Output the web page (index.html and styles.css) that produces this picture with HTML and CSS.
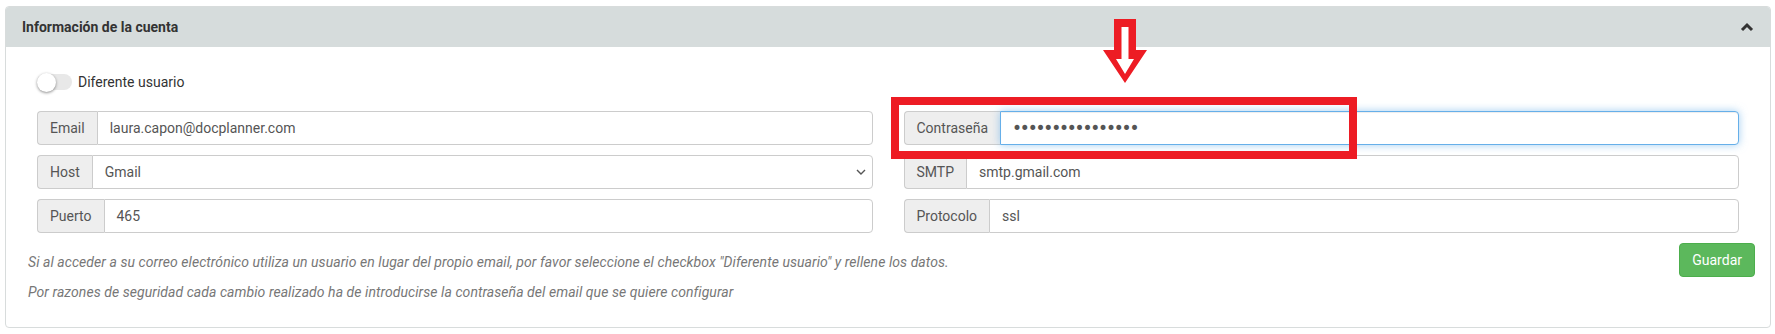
FILE: index.html
```html
<!DOCTYPE html>
<html lang="es">
<head>
<meta charset="utf-8">
<link rel="stylesheet" href="styles.css">
</head>
<body>
<div class="panel">
  <div class="panel-heading">
    <span class="panel-title">Información de la cuenta</span>
    <svg class="chev-up" width="14" height="10" viewBox="0 0 14 10"><polyline points="2,8 7,3 12,8" fill="none" stroke="#333" stroke-width="3"/></svg>
  </div>
  <div class="panel-body">
    <div class="switch-row">
      <span class="switch"><span class="knob"></span></span>
      <span class="switch-label">Diferente usuario</span>
    </div>
    <div class="grid">
      <div class="group"><span class="addon">Email</span><span class="field">laura.capon@docplanner.com</span></div>
      <div class="group"><span class="addon">Contraseña</span><input class="field focused pwd" type="password" value="xxxxxxxxxxxxxxxx"></div>
      <div class="group"><span class="addon">Host</span><span class="field select">Gmail<svg class="chev-down" width="10" height="7" viewBox="0 0 10 7"><polyline points="1,1 5,5 9,1" fill="none" stroke="#555" stroke-width="1.4"/></svg></span></div>
      <div class="group"><span class="addon">SMTP</span><span class="field">smtp.gmail.com</span></div>
      <div class="group"><span class="addon">Puerto</span><span class="field">465</span></div>
      <div class="group"><span class="addon">Protocolo</span><span class="field">ssl</span></div>
    </div>
    <div class="footer">
      <div class="notes">
        <p>Si al acceder a su correo electrónico utiliza un usuario en lugar del propio email, por favor seleccione el checkbox "Diferente usuario" y rellene los datos.</p>
        <p>Por razones de seguridad cada cambio realizado ha de introducirse la contraseña del email que se quiere configurar</p>
      </div>
      <button class="btn-save">Guardar</button>
    </div>
  </div>
</div>
<div class="highlight"></div>
<svg class="arrow" width="46" height="66" viewBox="0 0 46 66">
  <polygon points="11,0 33,0 33,31 44,31 22,64 0,31 11,31" fill="#ed1c24"/>
  <polygon points="18.5,8 25.5,8 25.5,40 31,40 22,55 13,40 18.5,40" fill="#fff"/>
</svg>
</body>
</html>
```
FILE: styles.css
```css
* { box-sizing: border-box; }
html, body { margin: 0; padding: 0; background: #fff; }
body {
  font-family: Roboto, "Liberation Sans", sans-serif;
  font-size: 14px;
  color: #333;
  position: relative;
  width: 1775px;
  height: 334px;
  overflow: hidden;
}
.panel {
  margin: 6px 4px 0 5px;
  border: 1px solid #d8dcdc;
  border-radius: 4px;
  background: #fff;
}
.panel-heading {
  height: 40px;
  background: #d6dcdc;
  border-radius: 3px 3px 0 0;
  display: flex;
  align-items: center;
  justify-content: space-between;
  padding: 0 16px 0 16px;
}
.panel-title { font-weight: 700; font-size: 14px; color: #333; }
.chev-up { display: block; }
.panel-body { padding: 27px 31px 15px 31px; }
.switch-row { display: flex; align-items: center; height: 18px; gap: 6px; margin-bottom: 20px; margin-top: -1px; }
.switch {
  width: 35px; height: 16px; border-radius: 8px; background: #e8e8e8;
  display: inline-flex; align-items: center; position: relative;
}
.knob {
  width: 19px; height: 19px; border-radius: 50%; background: #fff;
  box-shadow: 0 1px 3px rgba(0,0,0,.45);
}
.switch-label { font-size: 14px; color: #333; }
.grid {
  display: grid;
  grid-template-columns: 1fr 1fr;
  column-gap: 31px;
  row-gap: 10px;
  margin-top: 1px;
}
.group { display: flex; height: 34px; }
.addon {
  display: flex; align-items: center;
  padding: 0 12px;
  background: #eee;
  border: 1px solid #ccc;
  border-right: 0;
  border-radius: 4px 0 0 4px;
  color: #555;
  font-size: 14px;
}
.field {
  flex: 1;
  display: flex; align-items: center;
  padding: 0 12px;
  border: 1px solid #ccc;
  border-radius: 0 4px 4px 0;
  color: #555;
  font-family: Roboto, "Liberation Sans", sans-serif;
  font-size: 14px;
  background: #fff;
  min-width: 0;
}
input.field { outline: none; height: 34px; }
.pwd { font-family: "DejaVu Sans", sans-serif; font-size: 17px; letter-spacing: -2.2px; padding-left: 11px; }
.field.focused {
  border-color: #66afe9;
  box-shadow: inset 0 1px 1px rgba(0,0,0,.075), 0 0 8px rgba(102,175,233,.6);
}
.select { justify-content: space-between; padding-right: 6px; }
.chev-down { display: block; }
.footer {
  display: flex; justify-content: space-between; align-items: flex-start;
  margin: 10px -16px 0 -9px;
}
.notes { padding-top: 9px; }
.notes p {
  margin: 0 0 10px 0;
  line-height: 20px;
  font-style: italic;
  font-size: 14px;
  letter-spacing: 0.06px;
  color: #777;
}
.btn-save {
  height: 34px; padding: 0 12px;
  background: #5cb85c; border: 1px solid #4cae4c; border-radius: 4px;
  color: #fff; font-family: Roboto, "Liberation Sans", sans-serif; font-size: 14px;
}
.highlight {
  position: absolute; left: 891px; top: 97px; width: 466px; height: 62px;
  border: 8px solid #ed1c24;
}
.arrow { position: absolute; left: 1103px; top: 19px; }
```
